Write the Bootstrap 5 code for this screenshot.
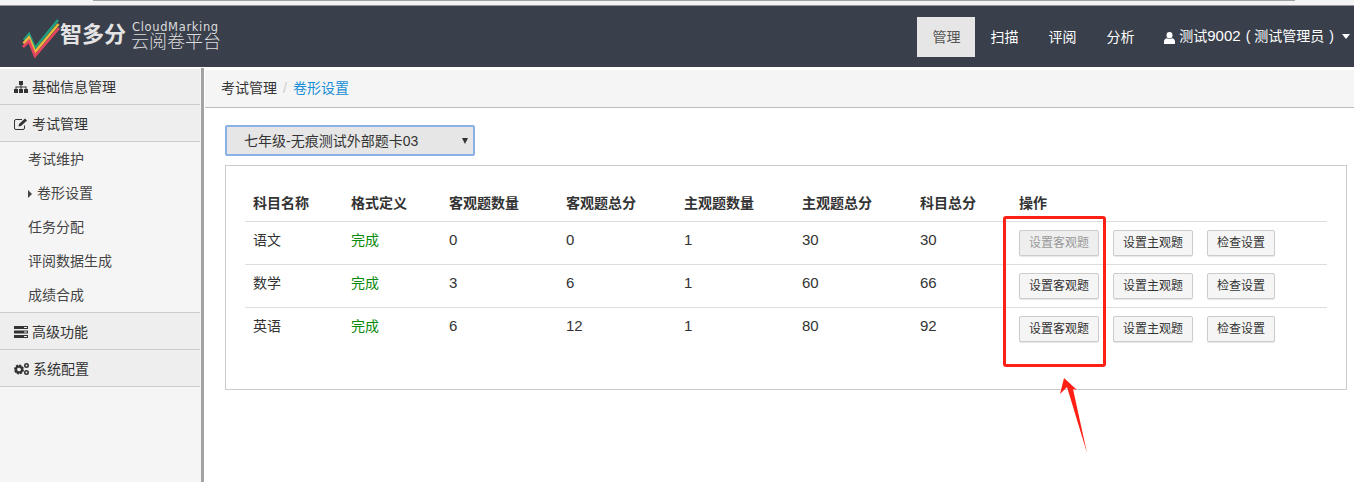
<!DOCTYPE html>
<html lang="zh">
<head>
    <meta charset="UTF-8">
    <meta name="viewport" content="width=device-width, initial-scale=1">
    <title>卷形设置</title>
    <link href="https://cdn.jsdelivr.net/npm/bootstrap@5.3.0/dist/css/bootstrap.min.css" rel="stylesheet">
    <style>
        html, body {
            height: 100%;
            overflow: hidden;
        }
        body {
            position: relative;
            font-family: "Liberation Sans", "Noto Sans CJK SC", sans-serif;
            font-size: 14px;
            color: #333;
            background: #fff;
        }
        .top-strip {
            height: 6px;
            background: #f3f3f3;
            border-bottom: 1px solid #999;
        }
        .top-strip div {
            height: 1px;
            margin: 0 59px 0 93px;
            background: #a0a0a0;
        }
        .top-bar {
            height: 61px;
            background: #3a3f4c;
            color: #fff;
            padding-left: 22px;
        }
        .logo-mark {
            margin-top: 5px;
        }
        .logo-name {
            font-size: 22px;
            font-weight: 700;
            color: #e4e4e4;
            line-height: 1;
            margin-bottom: 3px;
        }
        .logo-sub {
            color: #ddd;
            margin-left: 5px;
            line-height: 1;
        }
        .logo-en {
            font-family: "DejaVu Sans", sans-serif;
            font-size: 11.5px;
            letter-spacing: .65px;
            margin-left: 1px;
        }
        .logo-cn {
            font-size: 18px;
            font-weight: 300;
        }
        .top-nav a {
            display: block;
            width: 58px;
            height: 40px;
            line-height: 40px;
            text-align: center;
            color: #fff;
            text-decoration: none;
        }
        .top-nav a.on {
            background: #e6e6e6;
            color: #555;
        }
        .top-user {
            margin-left: 15px;
            margin-right: 4px;
            color: #fff;
            white-space: nowrap;
        }
        .user-digits {
            font-size: 15px;
        }
        .user-paren {
            margin: 0 4px 0 5px;
        }
        .user-caret {
            display: inline-block;
            border-left: 4px solid transparent;
            border-right: 4px solid transparent;
            border-top: 5px solid #fff;
            margin-left: 4px;
            vertical-align: 2px;
        }
        .page-body {
            height: 414px;
            margin-top: 1px;
        }
        .side-col {
            width: 204px;
            background: #f5f5f5;
            border-right: 3px solid #a3a3a3;
            flex: none;
        }
        .side-top {
            height: 37px;
            background: #eee;
            border-bottom: 1px solid #ccc;
            margin-right: 1px;
            padding-left: 14px;
            line-height: 38px;
        }
        .side-top:first-child {
            border-top: 1px solid #fff;
            line-height: 36px;
        }
        .side-top svg {
            margin-right: 4px;
            vertical-align: -1px;
        }
        .side-sub {
            height: 34px;
            line-height: 34px;
            padding-left: 28px;
            color: #444;
        }
        .side-subs {
            border-bottom: 1px solid #ccc;
            margin-right: 1px;
        }
        .side-arrow {
            display: inline-block;
            border-top: 4px solid transparent;
            border-bottom: 4px solid transparent;
            border-left: 4px solid #444;
            margin-right: 5px;
        }
        .main-area {
            margin-left: 1px;
            padding-top: 2px;
        }
        .crumb-bar {
            height: 38px;
            background: #f5f5f5;
            border-bottom: 1px solid #bbb;
            line-height: 37px;
            padding-left: 16px;
        }
        .crumb-sep {
            color: #ccc;
            margin: 0 6px;
        }
        .crumb-now {
            color: #1a8fd6;
        }
        .main-pad {
            padding: 17px 7px 0 20px;
        }
        .exam-pick {
            width: 250px;
            height: 31px;
            background: #e6e6e6;
            border: 2px solid #8ab0e8;
            border-radius: 2px;
            line-height: 29px;
            padding-left: 17px;
        }
        .exam-caret {
            position: absolute;
            right: 5px;
            top: 11px;
            border-left: 3.5px solid transparent;
            border-right: 3.5px solid transparent;
            border-top: 6px solid #333;
        }
        .score-panel {
            height: 225px;
            margin-top: 9px;
            padding: 20px 19px 0;
            border: 1px solid #ccc;
        }
        .score-table {
            table-layout: fixed;
            width: 100%;
            margin: 0;
        }
        .score-table th, .score-table td {
            padding: 0 8px;
            vertical-align: middle;
            border-bottom: 1px solid #ddd;
            color: #333;
            background: transparent;
        }
        .score-table th {
            height: 35px;
            font-weight: 700;
            vertical-align: top;
            padding-top: 7px;
        }
        .score-table td {
            height: 43px;
            padding-bottom: 5px;
        }
        .score-table tr:last-child td {
            border-bottom: 0;
        }
        .score-table td.done {
            color: #0a8a0a;
        }
        .score-table td.digits {
            font-size: 15px;
        }
        .score-table td.acts {
            padding-bottom: 0;
        }
        .w-a { width: 98px; }
        .w-b { width: 117px; }
        .w-c { width: 118px; }
        .w-d { width: 99px; }
        .act-btn {
            height: 26px;
            padding: 0 9px;
            margin-right: 14px;
            font-size: 12px;
            line-height: 24px;
            color: #333;
            background: #f5f5f5;
            border: 1px solid #ccc;
            border-radius: 2px;
            box-shadow: 0 1px 1px rgba(0,0,0,.1);
        }
        .act-btn:disabled {
            color: #999;
            background: #eee;
            border-color: #ccc;
            opacity: 1;
        }
        .mark-box {
            position: absolute;
            left: 1003px;
            top: 216px;
            width: 103px;
            height: 151px;
            border: 3px solid #ff2015;
            border-radius: 3px;
        }
        .mark-arrow {
            position: absolute;
            left: 1055px;
            top: 375px;
        }
    </style>
</head>
<body>
    <div class="top-strip"><div></div></div>
    <nav class="top-bar d-flex align-items-center">
        <svg class="logo-mark" width="38" height="42" viewBox="0 0 38 42" fill="none" stroke-width="2.600">
            <polyline points="2,22 7,16 13,30 36,2" stroke="#1f9d7e"/>
            <polyline points="1.500,25.500 7,19.500 13,34 36.500,6" stroke="#e9b83c"/>
            <polyline points="1,29 7,23 13,38 37,10" stroke="#e8465f"/>
        </svg>
        <span class="logo-name">智多分</span>
        <span class="logo-sub d-flex flex-column">
            <span class="logo-en">CloudMarking</span>
            <span class="logo-cn">云阅卷平台</span>
        </span>
        <div class="top-nav d-flex align-items-center ms-auto">
            <a class="on" href="#">管理</a>
            <a href="#">扫描</a>
            <a href="#">评阅</a>
            <a href="#">分析</a>
            <span class="top-user">
                <svg width="11" height="12" viewBox="0 0 11 12" fill="#fff"><ellipse cx="5.500" cy="3.200" rx="3" ry="3.200"/><path d="M0 12V9.500C0 7.500 1.500 6.500 3 6.200 4.400 7.400 6.600 7.400 8 6.200 9.500 6.500 11 7.500 11 9.500V12Z"/></svg>
                测试<span class="user-digits">9002</span><span class="user-paren">(</span>测试管理员<span class="user-paren">)</span><i class="user-caret"></i>
            </span>
        </div>
    </nav>
    <div class="page-body d-flex">
        <aside class="side-col">
            <div class="side-top">
                <svg width="14" height="12" viewBox="0 0 14 12" fill="#333"><rect x="5" y="0" width="4" height="4"/><rect x="0" y="8" width="4" height="4"/><rect x="5" y="8" width="4" height="4"/><rect x="10" y="8" width="4" height="4"/><path d="M6.500 4h1v1.500H12.500V8h-1V6.500h-4V8h-1V6.500h-4V8h-1V5.500H6.500Z"/></svg>基础信息管理
            </div>
            <div class="side-top">
                <svg width="14" height="12" viewBox="0 0 14 12" fill="none" stroke="#333"><path d="M10.500 7.500V10a1.500 1.500 0 0 1-1.500 1.500H2A1.500 1.500 0 0 1 .5 10V3A1.500 1.500 0 0 1 2 1.500H8"/><path d="M4.500 8.500l.5-2.500L11 .5l2 2L7 8Z" fill="#333" stroke="none"/></svg>考试管理
            </div>
            <div class="side-subs">
                <div class="side-sub">考试维护</div>
                <div class="side-sub"><i class="side-arrow"></i>卷形设置</div>
                <div class="side-sub">任务分配</div>
                <div class="side-sub">评阅数据生成</div>
                <div class="side-sub">成绩合成</div>
            </div>
            <div class="side-top">
                <svg width="14" height="12" viewBox="0 0 14 12" fill="#333"><path d="M0 0h14v3H0ZM0 4.500h14v3H0ZM0 9h14v3H0Z"/><path d="M10 1h3v1h-3ZM10 5.500h3v1h-3ZM10 10h3v1h-3Z" fill="#eee"/></svg>高级功能
            </div>
            <div class="side-top">
                <svg width="15" height="12" viewBox="0 0 15 12"><circle cx="5" cy="6.500" r="3.500" fill="none" stroke="#333" stroke-width="3" stroke-dasharray="1.800 .9"/><circle cx="5" cy="6.500" r="3" fill="none" stroke="#333" stroke-width="2"/><circle cx="12.500" cy="2.500" r="1.700" fill="none" stroke="#333" stroke-width="1.600"/><circle cx="12.500" cy="9.500" r="1.700" fill="none" stroke="#333" stroke-width="1.600"/></svg>系统配置
            </div>
        </aside>
        <main class="main-area flex-grow-1">
            <div class="crumb-bar">考试管理<span class="crumb-sep">/</span><span class="crumb-now">卷形设置</span></div>
            <div class="main-pad">
                <div class="exam-pick position-relative">七年级-无痕测试外部题卡03<i class="exam-caret"></i></div>
                <div class="score-panel">
                    <table class="table score-table">
                        <colgroup>
                            <col class="w-a"><col class="w-a"><col class="w-b"><col class="w-c"><col class="w-c"><col class="w-c"><col class="w-d"><col>
                        </colgroup>
                        <thead>
                            <tr><th>科目名称</th><th>格式定义</th><th>客观题数量</th><th>客观题总分</th><th>主观题数量</th><th>主观题总分</th><th>科目总分</th><th>操作</th></tr>
                        </thead>
                        <tbody>
                            <tr><td>语文</td><td class="done">完成</td><td class="digits">0</td><td class="digits">0</td><td class="digits">1</td><td class="digits">30</td><td class="digits">30</td><td class="acts"><button class="btn act-btn" disabled>设置客观题</button><button class="btn act-btn">设置主观题</button><button class="btn act-btn">检查设置</button></td></tr>
                            <tr><td>数学</td><td class="done">完成</td><td class="digits">3</td><td class="digits">6</td><td class="digits">1</td><td class="digits">60</td><td class="digits">66</td><td class="acts"><button class="btn act-btn">设置客观题</button><button class="btn act-btn">设置主观题</button><button class="btn act-btn">检查设置</button></td></tr>
                            <tr><td>英语</td><td class="done">完成</td><td class="digits">6</td><td class="digits">12</td><td class="digits">1</td><td class="digits">80</td><td class="digits">92</td><td class="acts"><button class="btn act-btn">设置客观题</button><button class="btn act-btn">设置主观题</button><button class="btn act-btn">检查设置</button></td></tr>
                        </tbody>
                    </table>
                </div>
            </div>
        </main>
    </div>
    <div class="mark-box"></div>
    <svg class="mark-arrow" width="36" height="82" viewBox="0 0 36 82"><polygon points="9,3 5,19 12,12 32,78 18,14 22,15" fill="#ff2015"/></svg>
    <script src="https://cdn.jsdelivr.net/npm/bootstrap@5.3.0/dist/js/bootstrap.bundle.min.js"></script>
</body>
</html>
